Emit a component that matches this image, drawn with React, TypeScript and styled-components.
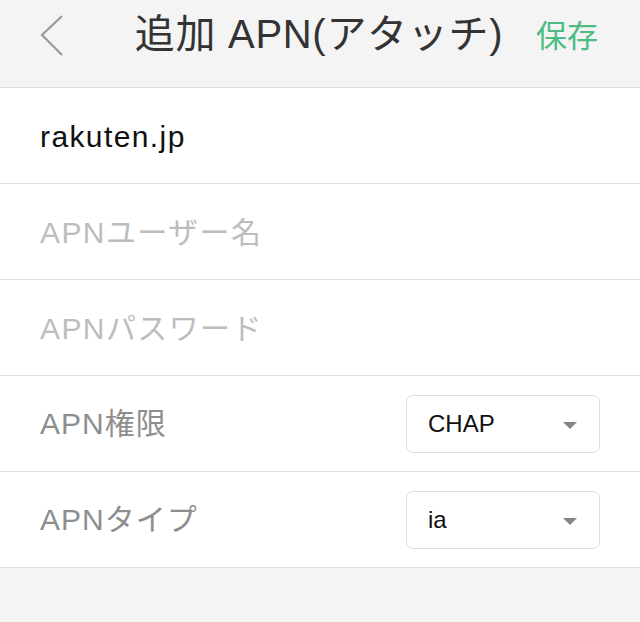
import React from "react";
import styled, { createGlobalStyle } from "styled-components";

const GlobalStyle = createGlobalStyle`
  html, body {
    margin: 0;
    padding: 0;
    background: #f4f4f4;
  }
  body {
    font-family: "Liberation Sans", "Noto Sans CJK JP", sans-serif;
  }
`;

interface FieldRow {
  label: string;
  value?: string;
  select?: string;
}

const textRows: FieldRow[] = [
  { label: "APN", value: "rakuten.jp" },
  { label: "APNユーザー名" },
  { label: "APNパスワード" },
];

const selectRows: FieldRow[] = [
  { label: "APN権限", select: "CHAP" },
  { label: "APNタイプ", select: "ia" },
];

const App: React.FC = () => {
  return (
    <Page>
      <GlobalStyle />
      <Header>
        <BackButton aria-label="戻る">
          <svg width="24" height="42" viewBox="0 0 24 42">
            <polyline
              points="22,1 2,20 22,40"
              fill="none"
              stroke="#9a9a9a"
              strokeWidth="2.2"
            />
          </svg>
        </BackButton>
        <Title>追加 APN(アタッチ)</Title>
        <SaveButton>保存</SaveButton>
      </Header>

      <List>
        {textRows.map((row) => (
          <Row key={row.label}>
            <Input
              type="text"
              placeholder={row.value ? "" : row.label}
              defaultValue={row.value}
            />
          </Row>
        ))}
        {selectRows.map((row) => (
          <Row key={row.label}>
            <Label>{row.label}</Label>
            <Select>
              <span>{row.select}</span>
              <Caret />
            </Select>
          </Row>
        ))}
      </List>
    </Page>
  );
};

const Page = styled.div`
  min-height: 622px;
  background: #f4f4f4;
`;

const Header = styled.header`
  display: grid;
  grid-template-columns: 1fr auto 1fr;
  align-items: center;
  height: 88px;
  box-sizing: border-box;
  padding: 0 42px 20px 40px;
  background: #f4f4f4;
  border-bottom: 1px solid #dcdcdc;
`;

const BackButton = styled.button`
  justify-self: start;
  display: flex;
  align-items: center;
  padding: 0;
  border: none;
  background: none;
  margin-top: 4px;
  cursor: pointer;
`;

const Title = styled.h1`
  margin: 0;
  font-size: 40px;
  font-weight: 400;
  color: #333;
  line-height: 48px;
  white-space: nowrap;
  letter-spacing: 0.7px;
`;

const SaveButton = styled.button`
  justify-self: end;
  padding: 0;
  border: none;
  background: none;
  font-family: inherit;
  font-size: 31px;
  color: #4dbb84;
  cursor: pointer;
`;

const List = styled.div`
  background: #fff;
`;

const Row = styled.div`
  display: flex;
  align-items: center;
  justify-content: space-between;
  height: 95px;
  padding: 0 40px;
  border-bottom: 1px solid #dedede;
`;

const Input = styled.input`
  flex: 1;
  border: none;
  outline: none;
  padding: 0;
  margin-top: 3px;
  background: none;
  font-family: inherit;
  font-size: 30px;
  letter-spacing: 1.4px;
  color: #111;

  &::placeholder {
    color: #bdbdbd;
  }
`;

const Label = styled.span`
  margin-bottom: 5px;
  font-size: 30px;
  letter-spacing: 1px;
  color: #8e8e8e;
`;

const Select = styled.div`
  display: flex;
  align-items: center;
  justify-content: space-between;
  width: 194px;
  height: 58px;
  box-sizing: border-box;
  padding: 0 22px 0 21px;
  border: 1.5px solid #dddddd;
  border-radius: 7px;
  font-size: 24px;
  color: #111;
`;

const Caret = styled.span`
  width: 0;
  height: 0;
  margin-top: 4px;
  border-left: 7.5px solid transparent;
  border-right: 7.5px solid transparent;
  border-top: 7px solid #858585;
`;

export default App;
